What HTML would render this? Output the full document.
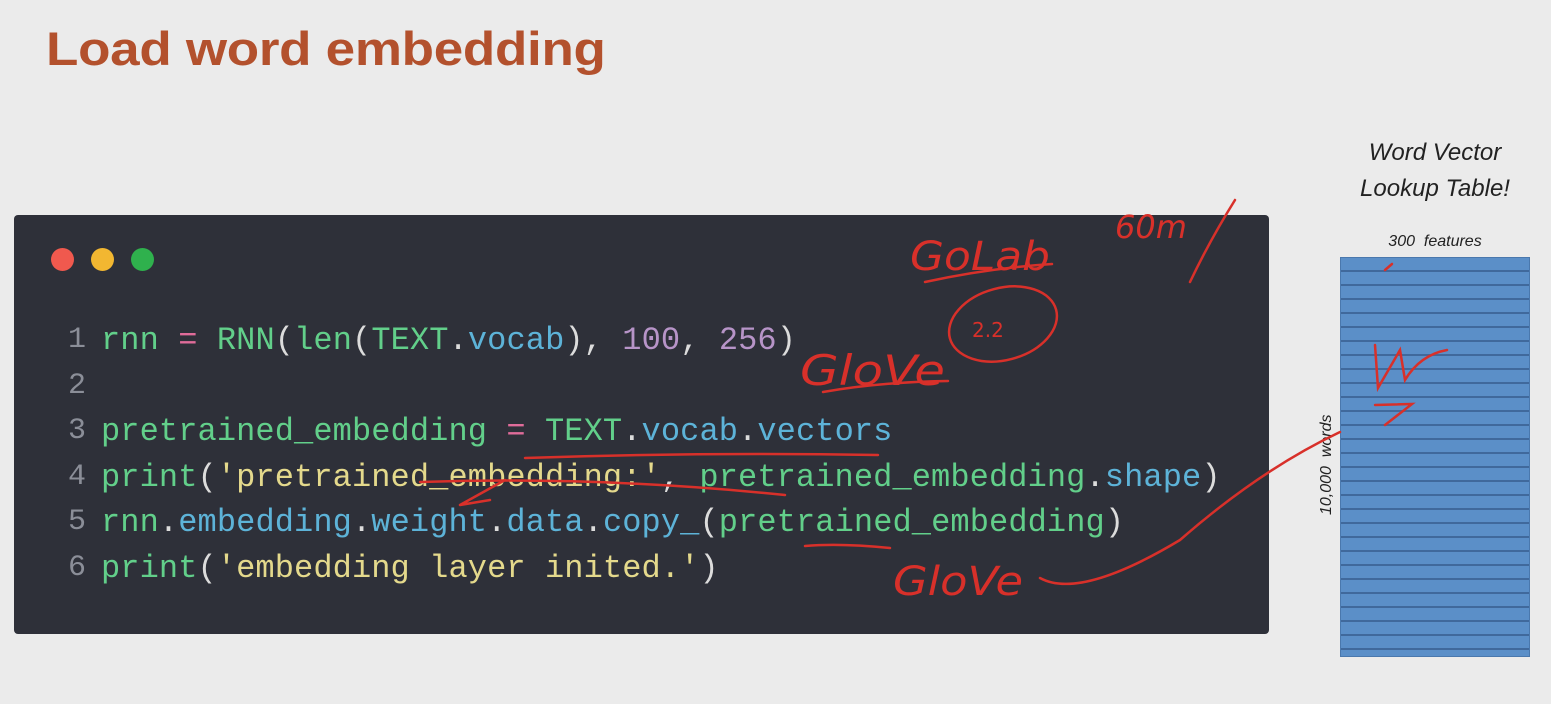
<!DOCTYPE html>
<html><head><meta charset="utf-8"><style>
html,body{margin:0;padding:0}
body{width:1551px;height:704px;background:#ebebeb;position:relative;overflow:hidden;font-family:"Liberation Sans",sans-serif}
.title{position:absolute;left:46px;top:22px;font-size:53px;font-weight:bold;color:#b3512d;letter-spacing:-0.3px;transform:scaleY(0.9);transform-origin:left top}
.box{position:absolute;left:14px;top:215px;width:1255px;height:419px;background:#2e3039;border-radius:4px}
.dot{position:absolute;top:248px;width:23px;height:23px;border-radius:50%}
.code{position:absolute;left:101px;top:318px;font-family:"Liberation Mono",monospace;font-size:32px;line-height:45.5px;color:#dcdcdc;white-space:pre;letter-spacing:0.1px}
.ln{position:absolute;left:68px;top:318px;font-family:"Liberation Mono",monospace;font-size:30px;line-height:45.5px;color:#8b8e98;white-space:pre}
.g{color:#62cf8a}.b{color:#5db3d8}.p{color:#e06c9a}.v{color:#b794c8}.y{color:#e4d98c}
.lab{position:absolute;font-style:italic;color:#222;text-align:center}
.tab{position:absolute;left:1340px;top:257px;width:190px;height:400px;background:repeating-linear-gradient(#5b8fc8 0,#5b8fc8 12px,#40699c 12px,#40699c 14px);border:1px solid #4a78ad;box-sizing:border-box}
</style></head><body>
<div class="title">Load word embedding</div>
<div class="box"></div>
<div class="dot" style="left:51px;background:#f0594e"></div>
<div class="dot" style="left:91px;background:#f2b731"></div>
<div class="dot" style="left:131px;background:#2fb14d"></div>
<div class="ln">1
2
3
4
5
6</div>
<div class="code"><span class="g">rnn</span> <span class="p">=</span> <span class="g">RNN</span>(<span class="g">len</span>(<span class="g">TEXT</span>.<span class="b">vocab</span>), <span class="v">100</span>, <span class="v">256</span>)

<span class="g">pretrained_embedding</span> <span class="p">=</span> <span class="g">TEXT</span>.<span class="b">vocab</span>.<span class="b">vectors</span>
<span class="g">print</span>(<span class="y">'pretrained_embedding:'</span>, <span class="g">pretrained_embedding</span>.<span class="b">shape</span>)
<span class="g">rnn</span>.<span class="b">embedding</span>.<span class="b">weight</span>.<span class="b">data</span>.<span class="b">copy_</span>(<span class="g">pretrained_embedding</span>)
<span class="g">print</span>(<span class="y">'embedding layer inited.'</span>)</div>
<div class="lab" style="left:1340px;top:135px;width:190px;font-size:24px;line-height:36px">Word Vector<br>Lookup Table!</div>
<div class="lab" style="left:1340px;top:233px;width:190px;font-size:16px">300&nbsp; features</div>
<div class="lab" style="font-size:16px;transform:rotate(-90deg);transform-origin:left top;left:1318px;top:515px;white-space:nowrap">10,000&nbsp; words</div>
<div class="tab"></div>
<svg style="position:absolute;left:0;top:0" width="1551" height="704" fill="none" stroke="#d8302a" stroke-width="2.5" stroke-linecap="round">
<path d="M525 458 Q700 452 878 455"/>
<path d="M420 482 Q600 476 785 495"/>
<path d="M505 480 L460 505 M460 505 L490 500"/>
<path d="M805 546 Q840 543 890 548"/>
<path d="M925 282 Q990 268 1052 264"/>
<path d="M823 392 Q880 382 948 381"/>
<ellipse cx="1003" cy="324" rx="55" ry="36" transform="rotate(-15 1003 324)"/>
<path d="M1040 578 Q1080 600 1180 540 Q1260 470 1340 432"/>
<path d="M1375 405 L1412 404 L1385 425"/>
<path d="M1375 345 L1378 388 L1400 350 L1405 380 Q1420 355 1447 350"/>
<path d="M1235 200 Q1210 240 1190 282"/>
<path d="M1385 270 L1392 264"/>
<g stroke="none" fill="#d8302a" font-family="DejaVu Sans" font-style="italic">
<text x="910" y="270" font-size="40" textLength="140" lengthAdjust="spacingAndGlyphs">GoLab</text>
<text x="1115" y="238" font-size="32">60m</text>
<text x="800" y="385" font-size="42" textLength="145" lengthAdjust="spacingAndGlyphs">GloVe</text>
<text x="893" y="595" font-size="40" textLength="130" lengthAdjust="spacingAndGlyphs">GloVe</text>
<text x="972" y="337" font-size="20" font-style="normal">2.2</text>
</g>
</svg>
</body></html>
